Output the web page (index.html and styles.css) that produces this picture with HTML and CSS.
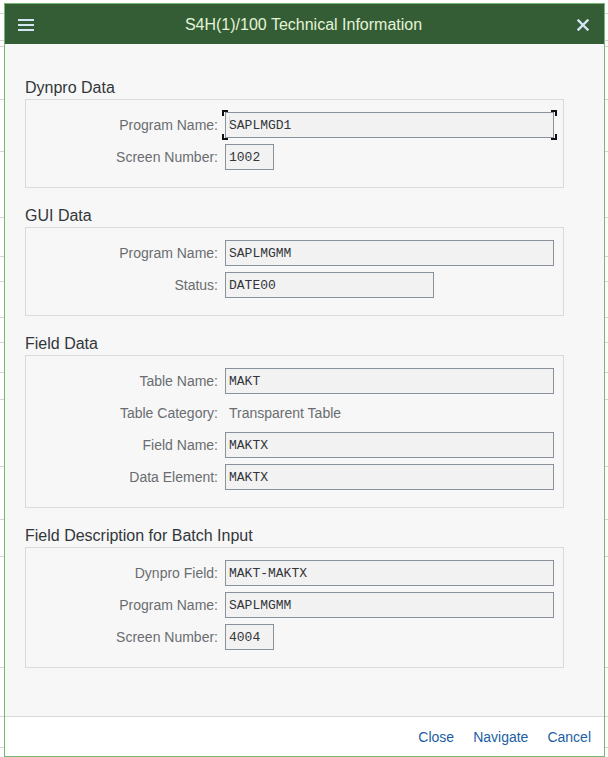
FILE: index.html
```html
<!DOCTYPE html>
<html lang="en">
<head>
<meta charset="utf-8">
<title>S4H(1)/100 Technical Information</title>
<link rel="stylesheet" href="styles.css">
</head>
<body>
<div class="backdrop">
  <div class="bg-row" style="height:14px"></div>
  <div class="bg-row" style="height:27px"></div>
  <div class="bg-row" style="height:6px"></div>
  <div class="bg-row" style="height:53px"></div>
  <div class="bg-row" style="height:52px"></div>
  <div class="bg-row" style="height:66px"></div>
  <div class="bg-row" style="height:39px"></div>
  <div class="bg-row" style="height:25px"></div>
  <div class="bg-row" style="height:36px"></div>
  <div class="bg-row" style="height:25px"></div>
  <div class="bg-row" style="height:30px"></div>
  <div class="bg-row" style="height:27px"></div>
  <div class="bg-row" style="height:67px"></div>
  <div class="bg-row" style="height:53px"></div>
  <div class="bg-row" style="height:37px"></div>
  <div class="bg-row" style="height:111px"></div>
  <div class="bg-row" style="height:49px"></div>
  <div class="bg-row" style="height:31px"></div>
</div>

<div class="dialog">
  <header class="dlg-header">
    <svg class="hamburger" width="16" height="12" viewBox="0 0 16 12" aria-hidden="true">
      <rect x="0" y="0" width="16" height="2" fill="#d4e6f6"/>
      <rect x="0" y="5" width="16" height="2" fill="#d4e6f6"/>
      <rect x="0" y="10" width="16" height="2" fill="#d4e6f6"/>
    </svg>
    <div class="dlg-title">S4H(1)/100 Technical Information</div>
    <svg class="close-x" width="12" height="12" viewBox="0 0 12 12" aria-hidden="true">
      <path d="M1.5 1.5 L10.5 10.5 M10.5 1.5 L1.5 10.5" stroke="#d4e6f6" stroke-width="2.4" stroke-linecap="square"/>
    </svg>
  </header>

  <main class="dlg-content">
    <section class="group">
      <h2 class="group-title">Dynpro Data</h2>
      <div class="group-box">
        <label class="lbl">Program Name:</label>
        <span class="field focus w-full"><span class="caret"></span>SAPLMGD1</span>
        <label class="lbl">Screen Number:</label>
        <span class="field w-sm">1002</span>
      </div>
    </section>

    <section class="group">
      <h2 class="group-title">GUI Data</h2>
      <div class="group-box">
        <label class="lbl">Program Name:</label>
        <span class="field w-full">SAPLMGMM</span>
        <label class="lbl">Status:</label>
        <span class="field w-md">DATE00</span>
      </div>
    </section>

    <section class="group">
      <h2 class="group-title">Field Data</h2>
      <div class="group-box">
        <label class="lbl">Table Name:</label>
        <span class="field w-full">MAKT</span>
        <label class="lbl">Table Category:</label>
        <span class="value">Transparent Table</span>
        <label class="lbl">Field Name:</label>
        <span class="field w-full">MAKTX</span>
        <label class="lbl">Data Element:</label>
        <span class="field w-full">MAKTX</span>
      </div>
    </section>

    <section class="group">
      <h2 class="group-title">Field Description for Batch Input</h2>
      <div class="group-box">
        <label class="lbl">Dynpro Field:</label>
        <span class="field w-full">MAKT-MAKTX</span>
        <label class="lbl">Program Name:</label>
        <span class="field w-full">SAPLMGMM</span>
        <label class="lbl">Screen Number:</label>
        <span class="field w-sm">4004</span>
      </div>
    </section>
  </main>

  <footer class="dlg-footer">
    <button class="btn">Close</button>
    <button class="btn">Navigate</button>
    <button class="btn">Cancel</button>
  </footer>
</div>
</body>
</html>
```

FILE: styles.css
```css
* { box-sizing: border-box; }

html, body {
  margin: 0;
  padding: 0;
  background: #ffffff;
  font-family: "Liberation Sans", Arial, sans-serif;
  width: 608px;
  height: 757px;
  overflow: hidden;
}

body { position: relative; }

.backdrop {
  display: flex;
  flex-direction: column;
}

.bg-row {
  border-bottom: 1px solid #d5d5d5;
  flex: none;
}

.dialog {
  position: absolute;
  left: 4px;
  top: 3px;
  width: 601px;
  height: 754px;
  border: 1px solid #74b874;
  background: #f7f7f7;
  display: flex;
  flex-direction: column;
}

.dlg-header {
  height: 40px;
  flex: none;
  background: #345d35;
  display: flex;
  align-items: center;
  padding: 0 15px 0 13px;
  position: relative;
}

.hamburger { display: block; flex: none; margin-top: 1px; }

.dlg-title {
  flex: 1;
  text-align: center;
  color: #e4f4d8;
  font-size: 16px;
  line-height: 20px;
  margin-top: 1px;
  margin-right: 4px;
}

.close-x { display: block; flex: none; margin-top: 1px; }

.dlg-content {
  flex: 1;
  padding: 33px 0 0 20px;
}

.group { margin-bottom: 17px; }

.group-title {
  margin: 0 0 1px;
  padding-top: 1px;
  font-size: 16px;
  line-height: 20px;
  font-weight: normal;
  color: #32363a;
}

.group-box {
  width: 539px;
  border: 1px solid #dadada;
  padding: 12px 9px 17px 0;
  display: grid;
  grid-template-columns: 192px 1fr;
  column-gap: 7px;
  row-gap: 6px;
  align-items: center;
}

.lbl {
  text-align: right;
  font-size: 14px;
  color: #6a6d70;
  line-height: 26px;
  white-space: nowrap;
}

.field {
  height: 26px;
  border: 1px solid #89919a;
  background: #f2f2f2;
  font-family: "Liberation Mono", "DejaVu Sans Mono", monospace;
  font-size: 13px;
  color: #32363a;
  line-height: 24px;
  padding: 1px 0 0 3px;
  position: relative;
  display: flex;
  align-items: center;
}

.w-full { width: 329px; }
.w-md { width: 209px; }
.w-sm { width: 49px; }

.value {
  font-size: 14px;
  color: #6a6d70;
  line-height: 26px;
  padding-left: 4px;
}

.caret {
  position: absolute;
  left: 3px;
  top: 3px;
  width: 1px;
  height: 11px;
  background: #dcdcdc;
}

.focus::after {
  content: "";
  position: absolute;
  left: -4px;
  top: -3px;
  right: -4px;
  bottom: -3px;
  background:
    linear-gradient(#111, #111) left top / 6px 2px no-repeat,
    linear-gradient(#111, #111) left top / 2px 6px no-repeat,
    linear-gradient(#111, #111) right top / 6px 2px no-repeat,
    linear-gradient(#111, #111) right top / 2px 6px no-repeat,
    linear-gradient(#111, #111) left bottom / 6px 2px no-repeat,
    linear-gradient(#111, #111) left bottom / 2px 6px no-repeat,
    linear-gradient(#111, #111) right bottom / 6px 2px no-repeat,
    linear-gradient(#111, #111) right bottom / 2px 6px no-repeat;
}

.dlg-footer {
  height: 40px;
  flex: none;
  background: #ffffff;
  border-top: 1px solid #d9d9d9;
  display: flex;
  justify-content: flex-end;
  align-items: center;
  gap: 19px;
  padding-right: 13px;
}

.btn {
  border: none;
  background: none;
  padding: 0;
  margin: 0;
  font-family: "Liberation Sans", Arial, sans-serif;
  font-size: 14px;
  color: #1c5ea3;
  line-height: 20px;
  cursor: pointer;
}
```
